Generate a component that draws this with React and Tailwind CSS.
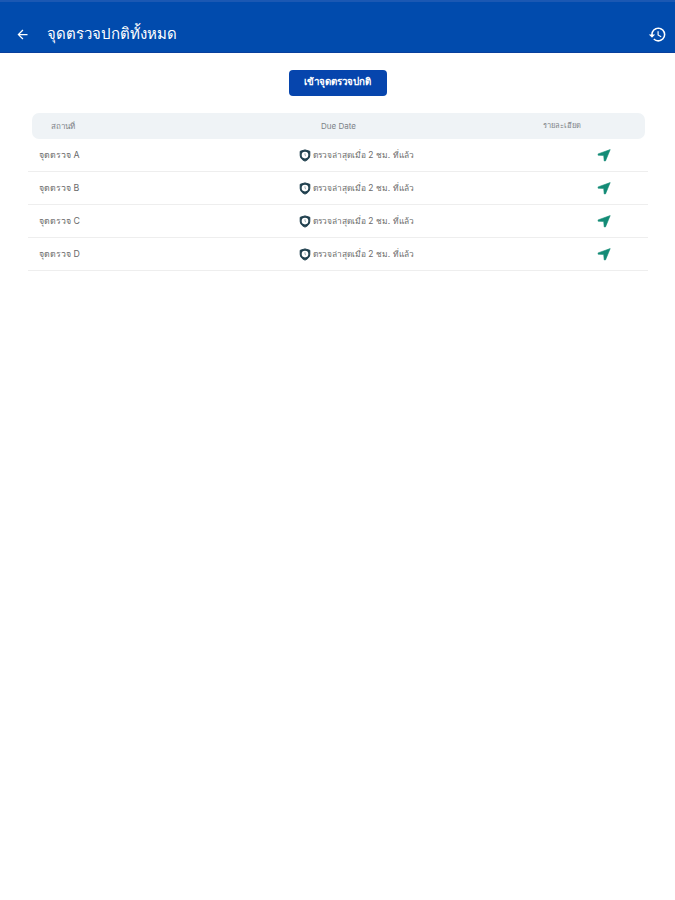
import { MdArrowBack, MdHistory } from 'react-icons/md';

const checkpoints = [
  { id: 'A', name: 'จุดตรวจ A', lastCheck: 'ตรวจล่าสุดเมื่อ 2 ชม. ที่แล้ว' },
  { id: 'B', name: 'จุดตรวจ B', lastCheck: 'ตรวจล่าสุดเมื่อ 2 ชม. ที่แล้ว' },
  { id: 'C', name: 'จุดตรวจ C', lastCheck: 'ตรวจล่าสุดเมื่อ 2 ชม. ที่แล้ว' },
  { id: 'D', name: 'จุดตรวจ D', lastCheck: 'ตรวจล่าสุดเมื่อ 2 ชม. ที่แล้ว' },
];

const ShieldClock = () => (
  <svg viewBox="0 0 12 13" className="w-3 h-[13px] shrink-0">
    <path
      d="M6 .9 10.8 2.3V6.3C10.8 9 8.8 11.1 6 12.1 3.2 11.1 1.2 9 1.2 6.3V2.3Z"
      fill="#1f3f4d"
      stroke="#1f3f4d"
      strokeLinejoin="round"
    />
    <circle cx="6" cy="6.1" r="3.3" fill="#fff" />
    <path d="M6 4.3V6.3L6.9 7" fill="none" stroke="#7d959d" strokeWidth=".8" />
  </svg>
);

const LocationArrow = () => (
  <svg viewBox="0 0 14 13" className="w-3.5 h-[13px]">
    <path
      d="M13.2.6 1.1 4.9V6.2L6.7 6.4 7.2 11.9H8.5Z"
      fill="#138b76"
      stroke="#138b76"
      strokeWidth=".6"
      strokeLinejoin="round"
    />
  </svg>
);

const App = () => {
  return (
    <div className="min-h-[900px] bg-white font-['Inter','Noto_Sans',sans-serif]">
      <header className="h-[53px] bg-[#014bad] border-t-2 border-[#1b58b3] border-b border-b-[#083f9d] flex items-end justify-between pl-[15px] pr-2 pb-2 text-white">
        <div className="flex items-center h-5">
          <button aria-label="Back">
            <MdArrowBack className="w-[15px] h-[15px]" />
          </button>
          <h1 className="ml-[17px] text-[15px] leading-5 font-medium whitespace-nowrap">
            จุดตรวจปกติทั้งหมด
          </h1>
        </div>
        <button aria-label="History">
          <MdHistory className="w-[19px] h-[19px]" />
        </button>
      </header>

      <div className="pt-[17px] flex justify-center">
        <button className="w-[98px] h-[26px] rounded-[4px] bg-[#0645ad] text-white text-[9.75px] font-semibold whitespace-nowrap pb-px">
          เข้าจุดตรวจปกติ
        </button>
      </div>

      <main className="pt-[17px] pl-7 pr-[27px]">
        {/* Column headings */}
        <div className="ml-1 mr-[3px] h-[26px] rounded-[7px] bg-[#eff3f6] flex items-center text-[8px] text-[#7c8287]">
          <div className="w-[289px] pl-[19px]">สถานที่</div>
          <div className="w-[222px]">Due Date</div>
          <div className="text-[7.5px]">รายละเอียด</div>
        </div>

        {checkpoints.map((point) => (
          <div
            key={point.id}
            className="h-[33px] border-b border-[#eeeeee] flex items-center text-[#6a6a6a]"
          >
            <div className="w-[271px] pl-[11px] text-[8.8px]">{point.name}</div>
            <div className="w-[298px] flex items-center gap-[2px] whitespace-nowrap">
              <ShieldClock />
              <span className="text-[8.4px]">{point.lastCheck}</span>
            </div>
            <LocationArrow />
          </div>
        ))}
      </main>
    </div>
  );
};

export default App;
